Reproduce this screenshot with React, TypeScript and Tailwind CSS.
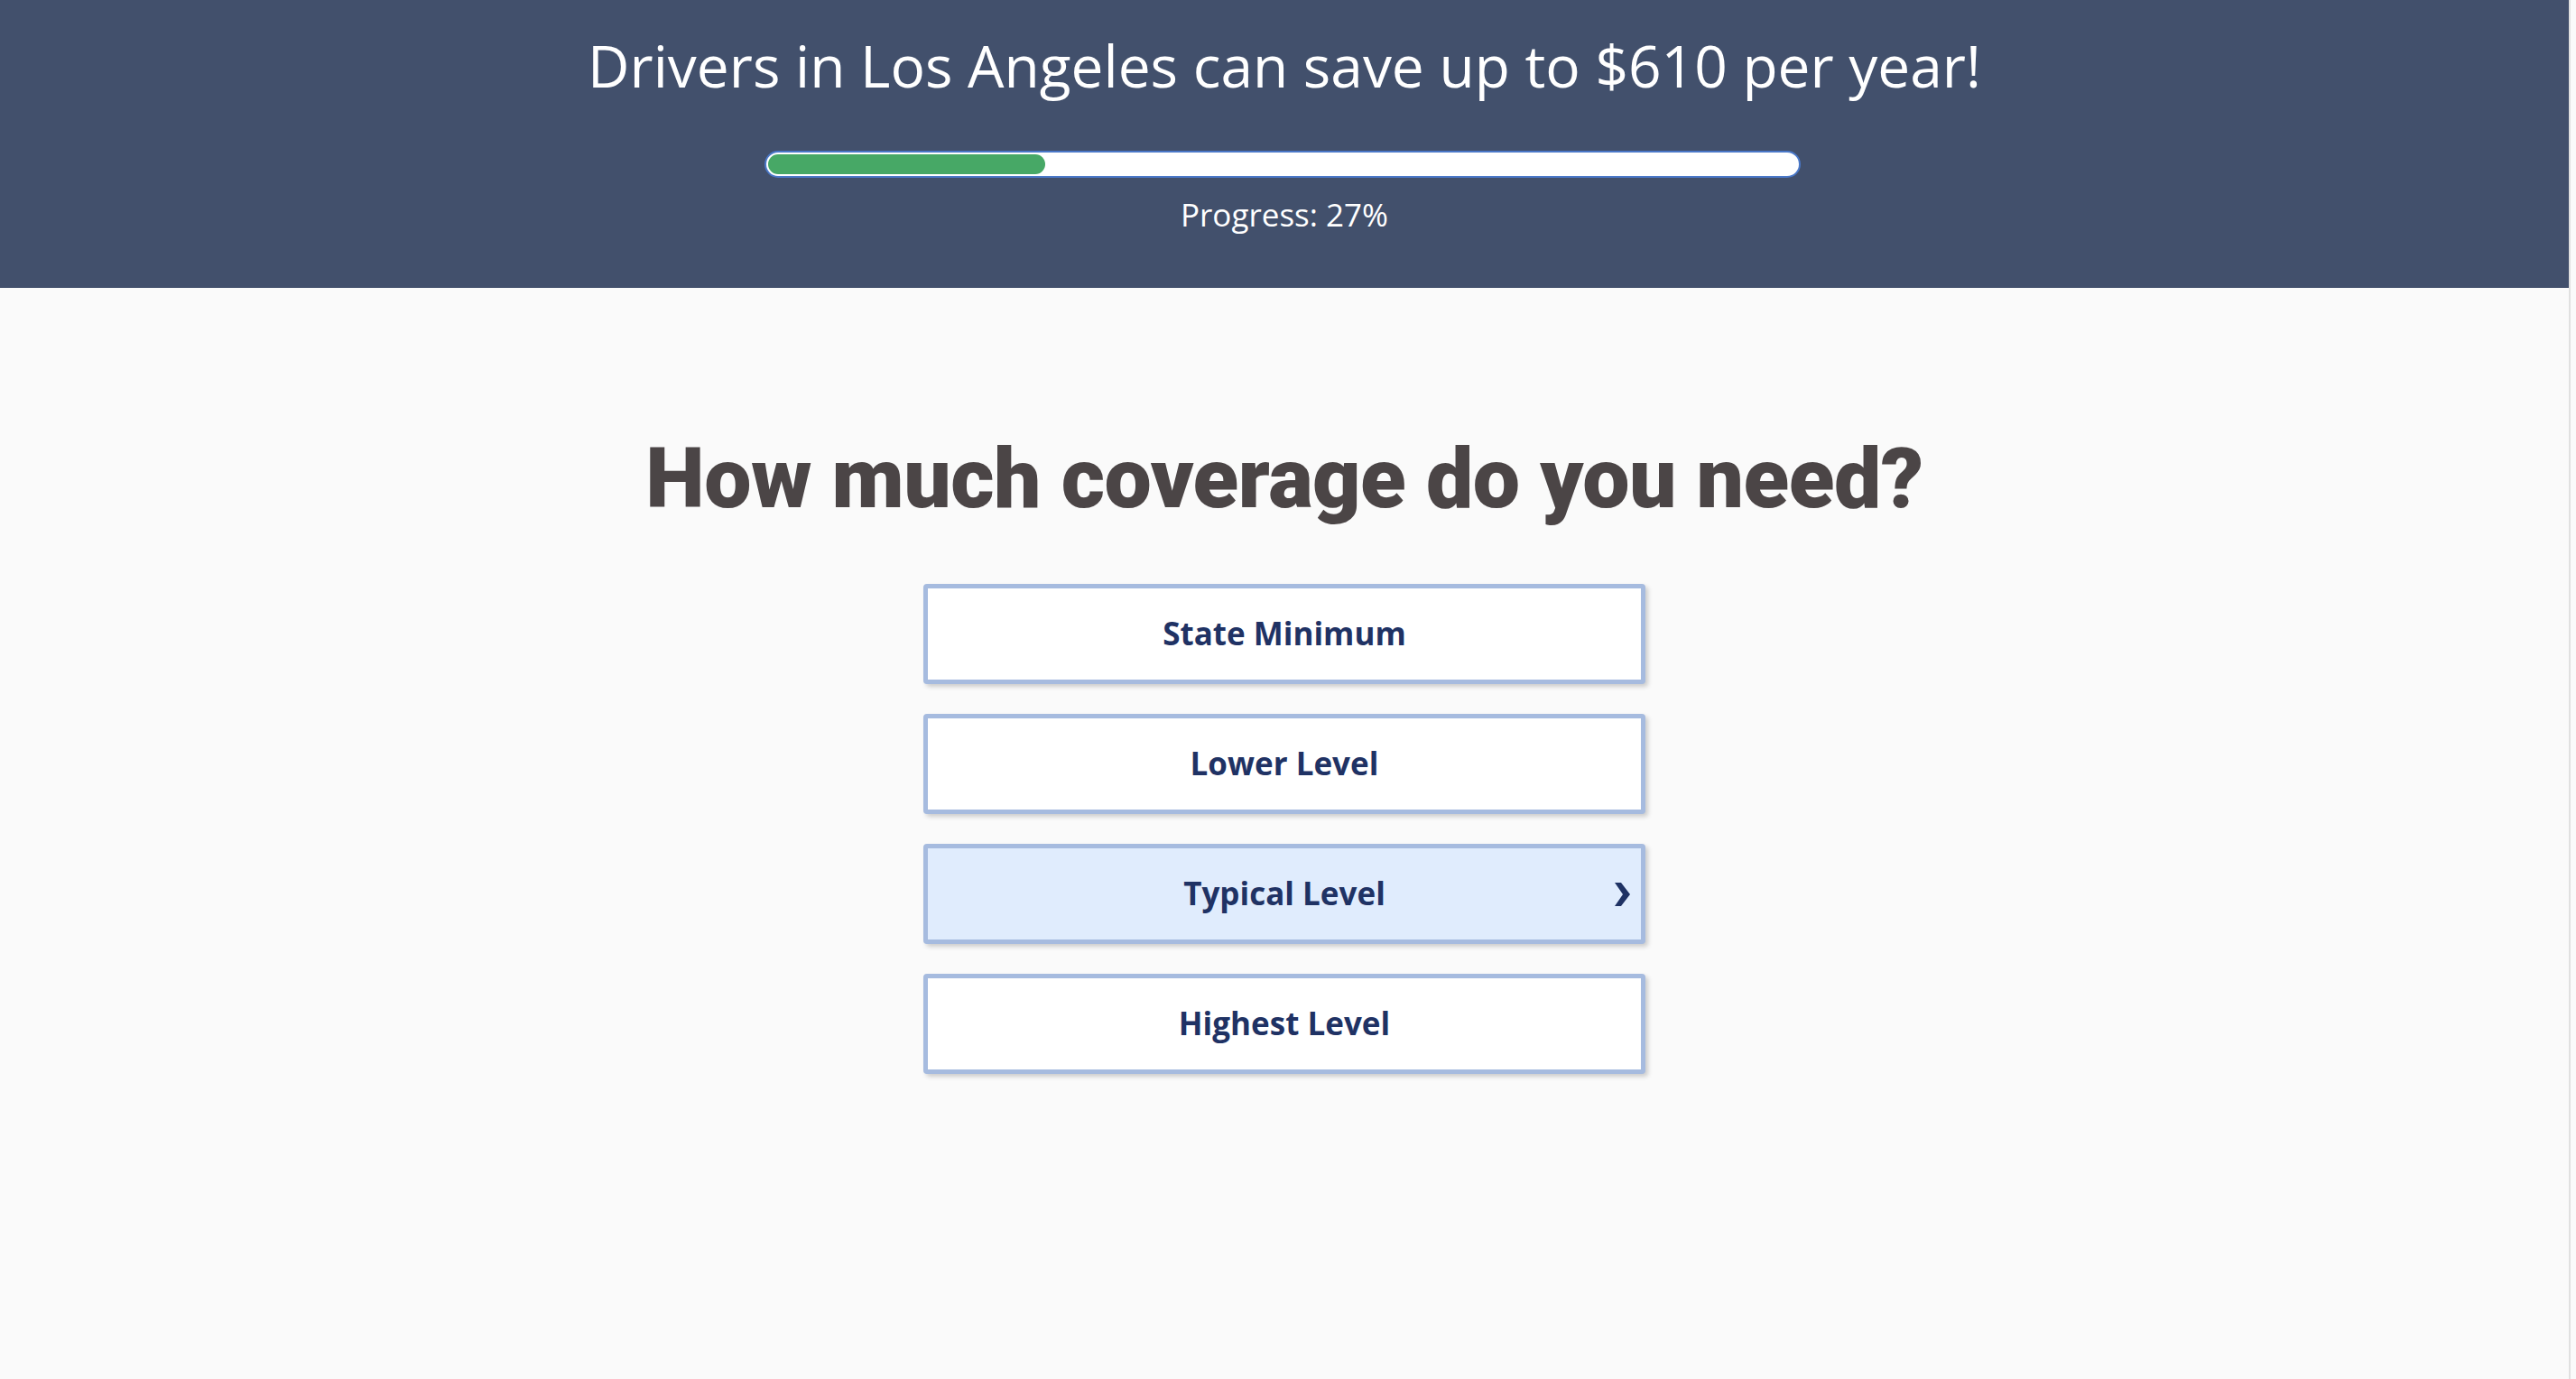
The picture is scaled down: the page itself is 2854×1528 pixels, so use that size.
import React from 'react'

const options = [
  { label: 'State Minimum', active: false },
  { label: 'Lower Level', active: false },
  { label: 'Typical Level', active: true },
  { label: 'Highest Level', active: false },
]

function Chevron() {
  return (
    <svg width="18" height="26" viewBox="0 0 18 26" className="absolute right-[12px] top-1/2 -translate-y-1/2">
      <path d="M1 0 H8 L18 13 L8 26 H1 L10 13 Z" fill="#1f3264" />
    </svg>
  )
}

export default function App() {
  const progress = 27

  return (
    <div className="min-h-screen flex bg-[#fafafa]">
      <div className="flex-1 flex flex-col">
        <header className="bg-[#42506c] pt-[41px] pb-[64px] flex flex-col items-center text-white font-['Open_Sans',sans-serif]">
          <h1 className="text-[64px] leading-none font-normal">Drivers in Los Angeles can save up to $610 per year!</h1>
          <div className="mt-[62px] -ml-[5px] w-[1148px] h-[30px] rounded-full bg-white border-2 border-[#4a78c8] p-[2px]">
            <div className="h-full rounded-full bg-[#47a866]" style={{ width: `${progress}%` }} />
          </div>
          <div className="mt-[23px] text-[35px] leading-none">Progress: {progress}%</div>
        </header>

        <main className="flex flex-col items-center pb-20">
          <h2 className="mt-[165px] text-[93px] leading-none font-black text-[#4b4546] font-['Roboto',sans-serif] tracking-[-0.5px]">
            How much coverage do you need?
          </h2>
          <div className="mt-[70px] flex flex-col gap-[33px]">
            {options.map((o) => (
              <button
                key={o.label}
                className={`relative w-[800px] h-[111px] rounded-[4px] border-[5px] border-[#a6bbdf] shadow-[3px_3px_5px_rgba(0,0,0,0.18)] flex items-center justify-center text-[35px] font-bold text-[#1f3264] font-['Open_Sans',sans-serif] ${o.active ? 'bg-[#e0ecfd]' : 'bg-white'}`}
              >
                {o.label}
                {o.active && <Chevron />}
              </button>
            ))}
          </div>
        </main>
      </div>
      <div className="w-[8px] border-l-2 border-[#e0e0e0] bg-[#fafafa]" />
    </div>
  )
}
